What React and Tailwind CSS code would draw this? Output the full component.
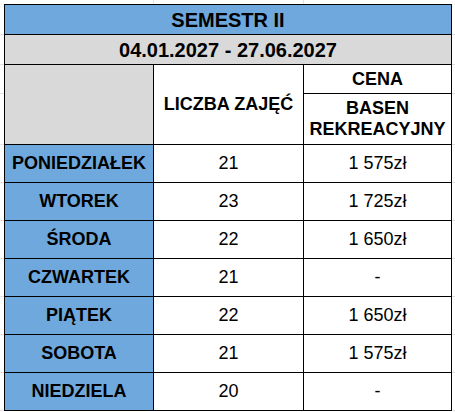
const DAYS = [
  { day: 'PONIEDZIAŁEK', count: 21, price: '1 575zł' },
  { day: 'WTOREK', count: 23, price: '1 725zł' },
  { day: 'ŚRODA', count: 22, price: '1 650zł' },
  { day: 'CZWARTEK', count: 21, price: '-' },
  { day: 'PIĄTEK', count: 22, price: '1 650zł' },
  { day: 'SOBOTA', count: 21, price: '1 575zł' },
  { day: 'NIEDZIELA', count: 20, price: '-' },
];

// heights of the faint spreadsheet rows beside the table (border included)
const SIDE_ROWS = ['h-[31px]', 'h-[30px]', 'h-[29px]', 'h-[51px]', 'h-[38px]', 'h-[38px]', 'h-[38px]', 'h-[38px]', 'h-[38px]', 'h-[38px]', 'h-[38px]'];

function SideStrip({ className }) {
  return (
    <div className={`flex flex-col ${className}`}>
      {SIDE_ROWS.map((h, i) => (
        <div key={i} className={`${h} border-b border-[#e2e2e2]`} />
      ))}
    </div>
  );
}

export default function App() {
  return (
    <div className="w-[455px] h-[412px] overflow-hidden bg-white text-black font-['Liberation_Sans',Arial,sans-serif]">
      <div className="flex h-[4px]">
        <div className="w-[154px] border-r border-[#e2e2e2]" />
        <div className="w-[150px] border-r border-[#e2e2e2]" />
      </div>
      <div className="flex">
        <SideStrip className="w-[4px]" />
        <div className="grid grid-cols-[148px_149px_147px] grid-rows-[29px_29px_28px_50px_repeat(7,37px)] gap-px bg-black border border-black">
          <div className="col-span-3 bg-[#6fa8dc] flex items-center justify-center text-[20px] font-bold">SEMESTR II</div>
          <div className="col-span-3 bg-[#d9d9d9] flex items-center justify-center text-[20px] font-bold">04.01.2027 - 27.06.2027</div>
          <div className="row-span-2 bg-[#d9d9d9]" />
          <div className="row-span-2 bg-white flex items-center justify-center text-[18px] font-bold">LICZBA ZAJĘĆ</div>
          <div className="bg-white flex items-center justify-center text-[18px] font-bold">CENA</div>
          <div className="bg-white flex flex-col items-center justify-center text-[18px] leading-[21px] font-bold text-center">
            <span>BASEN</span>
            <span>REKREACYJNY</span>
          </div>
          {DAYS.map((d) => (
            <div key={d.day} className="contents">
              <div className="bg-[#6fa8dc] flex items-center justify-center text-[18px] font-bold">{d.day}</div>
              <div className="bg-white flex items-center justify-center text-[18px]">{d.count}</div>
              <div className="bg-white flex items-center justify-center text-[18px]">{d.price}</div>
            </div>
          ))}
        </div>
        <SideStrip className="flex-1" />
      </div>
    </div>
  );
}
